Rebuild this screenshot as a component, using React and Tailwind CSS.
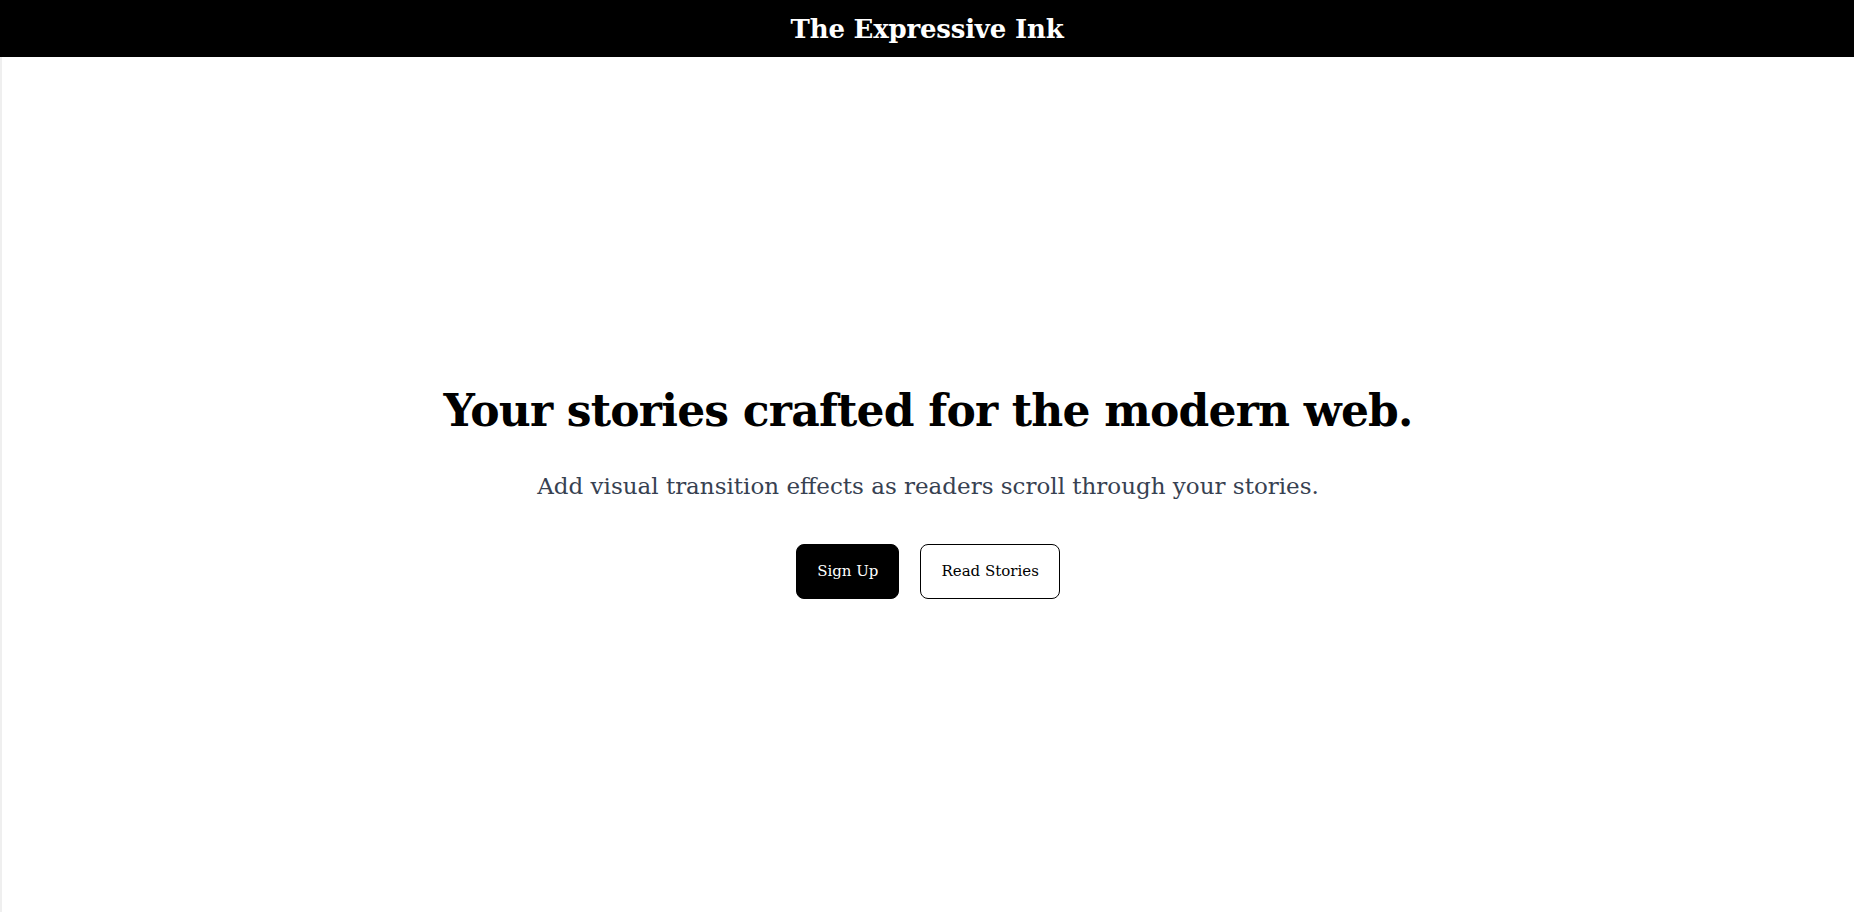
export default function App() {
  const serif = { fontFamily: '"DejaVu Serif", "Liberation Serif", serif' };
  return (
    <div className="min-h-screen flex flex-col bg-white" style={serif}>
      <header className="h-[57px] bg-black flex items-center justify-center">
        <h1 className="text-[26px] font-bold text-white leading-none tracking-[-0.2px]">The Expressive Ink</h1>
      </header>
      <main className="flex-1 flex flex-col items-center justify-center border-l-2 border-[#efefef] pt-[16px]">
        <h2 className="text-[44px] leading-[48px] font-bold text-black tracking-[-0.8px]">Your stories crafted for the modern web.</h2>
        <p className="mt-[35px] text-[23px] leading-[32px] text-[#374151]">Add visual transition effects as readers scroll through your stories.</p>
        <div className="mt-[42px] flex gap-[21px]">
          <button className="h-[55px] px-5 rounded-lg bg-black text-white text-[15px] border border-black">Sign Up</button>
          <button className="h-[55px] px-5 rounded-lg bg-white text-black text-[15px] border border-black">Read Stories</button>
        </div>
      </main>
    </div>
  );
}
